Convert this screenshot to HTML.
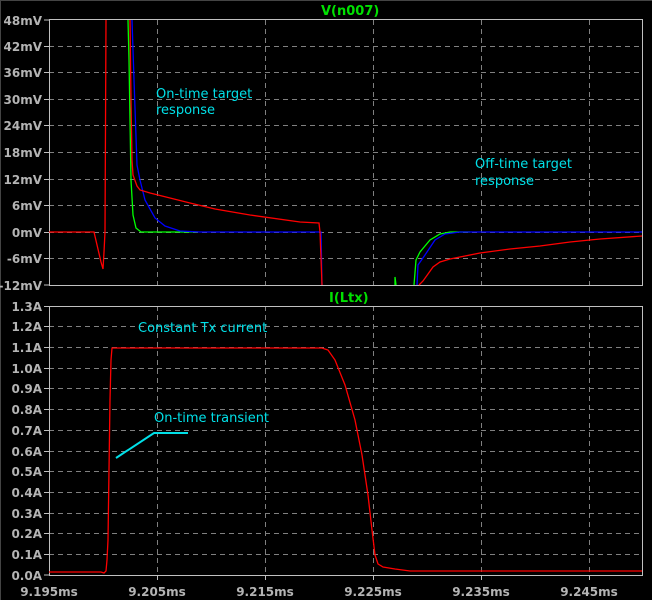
<!DOCTYPE html>
<html><head><meta charset="utf-8"><style>
html,body{margin:0;padding:0;background:#000;}
svg{display:block;}
text{font-family:"DejaVu Sans","Liberation Sans",sans-serif;}
.ax{fill:#b4b4b4;font-size:12px;font-weight:bold;}
.an{fill:#00e0e8;font-size:13px;}
</style></head><body>
<svg width="652" height="600" viewBox="0 0 652 600" xmlns="http://www.w3.org/2000/svg">
<rect width="652" height="600" fill="#000"/>
<path d="M0.5 600V0.5H652" stroke="#444" fill="none"/>
<g stroke="#808080" stroke-dasharray="5,4" stroke-width="1">
<path d="M157.5 20V285M265.5 20V285M373.5 20V285M481.5 20V285M589.5 20V285"/>
<path d="M157.5 306V575M265.5 306V575M373.5 306V575M481.5 306V575M589.5 306V575"/>
<path d="M49 46.5H642M49 72.5H642M49 99.5H642M49 125.5H642M49 152.5H642M49 179.5H642M49 205.5H642M49 232.5H642M49 258.5H642"/>
<path d="M49 326.5H642M49 347.5H642M49 368.5H642M49 388.5H642M49 409.5H642M49 430.5H642M49 451.5H642M49 471.5H642M49 492.5H642M49 513.5H642M49 533.5H642M49 554.5H642"/>
</g>
<g stroke="#c0c0c0" fill="none">
<rect x="49.5" y="19.5" width="593" height="266"/>
<rect x="49.5" y="306.5" width="593" height="269"/>
<path d="M44 20H49M44 46.5H49M44 72.5H49M44 99.5H49M44 125.5H49M44 152.5H49M44 179.5H49M44 205.5H49M44 232.5H49M44 258.5H49M44 285H49"/>
<path d="M44 306.5H49M44 326.5H49M44 347.5H49M44 368.5H49M44 388.5H49M44 409.5H49M44 430.5H49M44 451.5H49M44 471.5H49M44 492.5H49M44 513.5H49M44 533.5H49M44 554.5H49M44 575H49"/>
<path d="M157.5 575V580M265.5 575V580M373.5 575V580M481.5 575V580M589.5 575V580"/>
</g>
<g class="ax" text-anchor="end">
<text x="42" y="25">48mV</text><text x="42" y="51">42mV</text><text x="42" y="77">36mV</text><text x="42" y="104">30mV</text><text x="42" y="130">24mV</text><text x="42" y="157">18mV</text><text x="42" y="184">12mV</text><text x="42" y="210">6mV</text><text x="42" y="237">0mV</text><text x="42" y="263">-6mV</text><text x="42" y="290">-12mV</text>
<text x="42" y="311">1.3A</text><text x="42" y="331">1.2A</text><text x="42" y="352">1.1A</text><text x="42" y="373">1.0A</text><text x="42" y="393">0.9A</text><text x="42" y="414">0.8A</text><text x="42" y="435">0.7A</text><text x="42" y="456">0.6A</text><text x="42" y="476">0.5A</text><text x="42" y="497">0.4A</text><text x="42" y="518">0.3A</text><text x="42" y="538">0.2A</text><text x="42" y="559">0.1A</text><text x="42" y="580">0.0A</text>
</g>
<g class="ax" text-anchor="middle">
<text x="49" y="596">9.195ms</text><text x="157" y="596">9.205ms</text><text x="265" y="596">9.215ms</text><text x="373" y="596">9.225ms</text><text x="481" y="596">9.235ms</text><text x="589" y="596">9.245ms</text>
</g>
<text x="321" y="15" fill="#00e000" font-size="13" font-weight="bold">V(n007)</text>
<text x="329" y="302" fill="#00e000" font-size="13" font-weight="bold">I(Ltx)</text>
<g fill="none" stroke-width="1.3">
<polyline stroke="#00ff00" points="128,20 129,60 131,180 133,215 136,228 141,232 198,232"/>
<polyline stroke="#0000ff" points="132,20 134,80 137,165 140,180 145,200 155,218 165,226 180,231 200,232 321,232 322,285"/>
<polyline stroke="#ff0000" points="49,232 94,232 101,262 103,269 104,252 105,232 106,20"/>
<polyline stroke="#ff0000" points="130,20 131,100 132,160 133,175 137,186 140,190 150,193 170,198 190,203 215,209 250,215 300,222 319,223 320,232 322,285"/>
<polyline stroke="#00ff00" points="395,285 395,277 396,285"/>
<polyline stroke="#00ff00" points="414,285 416,260 420,252 430,240 440,234 450,232 470,232"/>
<polyline stroke="#0000ff" points="417,285 418,265 425,255 435,240 445,234 460,232 642,232"/>
<polyline stroke="#ff0000" points="419,285 423,281 428,274 433,267 440,262 450,259 465,256 480,253 510,249 540,246 570,242 600,239 642,236"/>
<polyline stroke="#ff0000" points="49,572 101,572 104,573 106,571 107,560 108,540 110,400 111,360 112,348 322,348 328,350 335,360 345,385 355,420 362,455 368,495 372,530 375,555 378,564 383,567 395,569 410,571 642,571"/>
</g>
<g class="an">
<text x="156" y="98">On-time target</text><text x="156" y="114">response</text>
<text x="475" y="168">Off-time target</text><text x="475" y="185">response</text>
<text x="138" y="332">Constant Tx current</text>
<text x="154" y="422">On-time transient</text>
</g>
<polyline points="116,458 154,433 188,433" stroke="#00e0e8" stroke-width="2" fill="none"/>
</svg>
</body></html>
